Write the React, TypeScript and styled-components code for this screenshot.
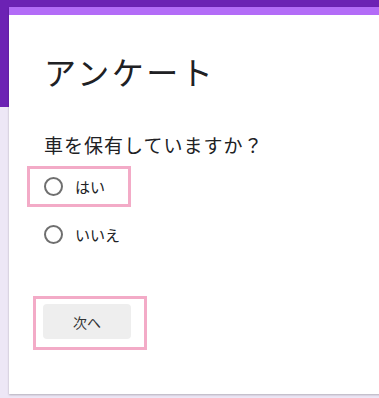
import styled, { createGlobalStyle } from 'styled-components'

const GlobalStyle = createGlobalStyle`
  html, body {
    margin: 0;
    padding: 0;
    overflow: hidden;
    background: #ede7f6;
    font-family: "Noto Sans CJK JP", "Noto Sans", sans-serif;
  }
`

const Page = styled.div`
  height: 398px;
  overflow: hidden;
  background: linear-gradient(#6c22b4 0, #6c22b4 107px, #ede7f6 107px);
  padding: 7px 0 0 9px;
  box-sizing: border-box;
`

const Card = styled.div`
  width: calc(100% + 40px);
  height: 387px;
  background: #fff;
  border-top: 8px solid #b36cf7;
  box-shadow: 0 1px 2px rgba(0, 0, 0, 0.25);
  box-sizing: border-box;
  padding: 30px 0 0 35px;
  display: flex;
  flex-direction: column;
  align-items: flex-start;
`

const Title = styled.h1`
  margin: 0;
  font-size: 32px;
  font-weight: 400;
  color: #202124;
  line-height: 52px;
  letter-spacing: 2.5px;
`

const Question = styled.div`
  margin-top: 34px;
  font-size: 19px;
  color: #202124;
  line-height: 28px;
  letter-spacing: 1px;
`

const Options = styled.div`
  margin-top: 7px;
  display: flex;
  flex-direction: column;
  gap: 7px;
  margin-left: -17px;
`

const Option = styled.label<{ $marked?: boolean }>`
  display: flex;
  align-items: center;
  gap: 12px;
  width: 104px;
  height: 41px;
  box-sizing: border-box;
  padding-left: 14px;
  border: 3px solid ${({ $marked }) => ($marked ? '#f3abc7' : 'transparent')};
  font-size: 15px;
  color: #202124;
`

const Radio = styled.span`
  width: 19px;
  height: 19px;
  box-sizing: border-box;
  border: 2px solid #6f6f6f;
  border-radius: 50%;
  flex: none;
`

const ButtonFrame = styled.div`
  margin-top: 41px;
  margin-left: -11px;
  border: 3px solid #f3abc7;
  padding: 5px 13px 8px 7px;
`

const NextButton = styled.button`
  width: 88px;
  height: 35px;
  border: none;
  border-radius: 4px;
  background: #eeeeee;
  color: #333;
  font-family: inherit;
  font-size: 14px;
  padding: 0;
`

export default function App() {
  return (
    <>
      <GlobalStyle />
      <Page>
        <Card>
          <Title>アンケート</Title>
          <Question>車を保有していますか？</Question>
          <Options>
            <Option $marked>
              <Radio />
              はい
            </Option>
            <Option>
              <Radio />
              いいえ
            </Option>
          </Options>
          <ButtonFrame>
            <NextButton>次へ</NextButton>
          </ButtonFrame>
        </Card>
      </Page>
    </>
  )
}
